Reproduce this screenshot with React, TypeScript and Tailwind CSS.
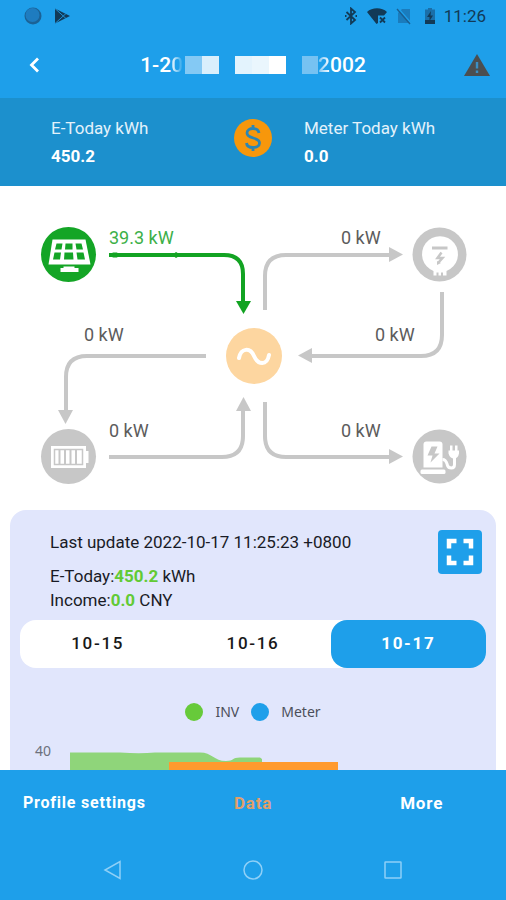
import { useState } from "react";

const GRAY = "#c7c7c7";
const GREEN = "#12a322";

function StatusBar() {
  return (
    <div className="flex h-8 shrink-0 items-center justify-between pl-6 pr-5 text-[#123a57]">
      <div className="flex items-center gap-3">
        <svg viewBox="0 0 18 18" className="size-[18px]" aria-hidden="true">
          <circle cx="9" cy="9" r="8.500" fill="#1b6296" />
          <circle cx="8.500" cy="8" r="7" fill="#1e7cc0" />
        </svg>
        <svg viewBox="0 0 18 18" className="size-[18px]" aria-hidden="true">
          <path d="M1 1.500l15 7.500-15 7.500z" fill="currentColor" />
          <path d="M1 1.500l11 10M1 16.500l11-10" stroke="#1e8fd5" strokeWidth="1" fill="none" />
        </svg>
      </div>
      <div className="flex items-center">
        <svg viewBox="0 0 14 18" className="h-[18px] w-[14px]" fill="none" stroke="currentColor" strokeWidth="1.800" aria-hidden="true">
          <path d="M2.500 5l8.500 8-4 3.500V1.500L11 5l-8.500 8M1 9h1.500M11.500 9H13" />
        </svg>
        <svg viewBox="0 0 22 18" className="ml-2 h-[18px] w-[22px]" aria-hidden="true">
          <path d="M1 5C6 0 16 0 21 5l-3 3.500h-6V16L10.500 17z" fill="currentColor" />
          <path d="M14 10.500l5 5M19 10.500l-5 5" stroke="currentColor" strokeWidth="1.800" />
        </svg>
        <svg viewBox="0 0 16 18" className="ml-2 h-[18px] w-4" aria-hidden="true">
          <path d="M6 2h8v14H2V6z" fill="#1a7cbd" />
          <path d="M2 1l13 15" stroke="#1e9fea" strokeWidth="1.500" />
          <path d="M1 2l13 15" stroke="#1a5f91" strokeWidth="1.300" />
        </svg>
        <svg viewBox="0 0 12 18" className="ml-3 h-[18px] w-3" aria-hidden="true">
          <path d="M4 1h4v1.500h3V17H1V2.500h3z" fill="#1a6fa9" />
          <path d="M1 13h10v4H1z" fill="currentColor" />
          <path d="M7 4L3 10h2.500v4L9 8.500H6.500z" fill="currentColor" />
        </svg>
        <span className="ml-2 text-[17px] leading-6">11:26</span>
      </div>
    </div>
  );
}

function TitleBar() {
  return (
    <header className="grid h-[66px] shrink-0 grid-cols-[44px_1fr_44px] items-center px-3">
      <button type="button" aria-label="Back" className="flex h-11 items-center justify-center">
        <svg viewBox="0 0 12 16" className="h-4 w-3" fill="none" stroke="#fff" strokeWidth="2.800" aria-hidden="true">
          <path d="M10 1.500L3.500 8l6.500 6.500" />
        </svg>
      </button>
      <h1 className="flex items-center justify-center text-[21px] font-medium leading-6 text-white">
        <span>1-2</span>
        <span className="bg-linear-to-r from-white to-transparent bg-clip-text text-transparent">0</span>
        <span className="ml-0.5 flex h-[18px]">
          <span className="w-[17px] bg-[#84c9f4]" />
          <span className="w-[17px] bg-[#d9effc]" />
        </span>
        <span className="ml-4 flex h-[18px]">
          <span className="w-[17px] bg-[#e3f3fd]" />
          <span className="w-[17px] bg-[#eaf6fd]" />
          <span className="w-[17px] bg-white" />
        </span>
        <span className="ml-4 h-[18px] w-4 bg-[#76c2f2]" />
        <span className="bg-linear-to-r from-[#76c2f2] to-white bg-clip-text text-transparent">2</span>
        <span>002</span>
      </h1>
      <button type="button" aria-label="Alerts" className="flex h-11 items-center justify-end">
        <svg viewBox="0 0 26 22" className="mr-1 h-[22px] w-[26px]" aria-hidden="true">
          <path d="M13 0l13 22H0z" fill="#4b4e50" />
          <path d="M13 8v6.500M13 16.500v2.500" stroke="#3b8fc4" strokeWidth="2.400" />
        </svg>
      </button>
    </header>
  );
}

function Totals() {
  return (
    <section className="grid h-[88px] shrink-0 grid-cols-[1fr_38px_1fr] items-center bg-[#1c90cd] text-white">
      <dl className="pl-[51px] text-[17px] leading-7">
        <dt className="text-[#e3f2fb]">E-Today kWh</dt>
        <dd className="font-bold">450.2</dd>
      </dl>
      <svg viewBox="0 0 38 38" className="mb-2 size-[38px]" aria-hidden="true">
        <circle cx="19" cy="19" r="19" fill="#f7970b" />
        <path
          d="M25 14c-.5-3-3-4.500-6-4.500s-6 1.500-6 4.500c0 6.500 12.500 3.500 12.500 10 0 3-3 4.500-6.500 4.500S12.800 27 12.500 24M19 6v4M19 28v4"
          fill="none"
          stroke="#2b86b4"
          strokeWidth="2.800"
        />
      </svg>
      <dl className="pl-8 text-[17px] leading-7">
        <dt className="text-[#e3f2fb]">Meter Today kWh</dt>
        <dd className="font-bold">0.0</dd>
      </dl>
    </section>
  );
}

const flows = [
  { line: "M109 69H224Q243 69 243 88V116", head: "M236 115h15l-7.500 13z", color: GREEN, label: "39.3 kW", x: 109, y: 58 },
  { line: "M265 124V90Q265 69 286 69H390", head: "M389 61v15l14-7.500z", color: GRAY, label: "0 kW", x: 341, y: 58 },
  { line: "M442 106V149Q442 170 421 170H311", head: "M312 162v15l-14-7.500z", color: GRAY, label: "0 kW", x: 375, y: 155 },
  { line: "M206 170H87Q66 170 66 191V225", head: "M58 224h15l-7.500 14z", color: GRAY, label: "0 kW", x: 84, y: 155 },
  { line: "M109 271H222Q243 271 243 250V224", head: "M236 225h15l-7.500-14z", color: GRAY, label: "0 kW", x: 109, y: 251 },
  { line: "M265 216V250Q265 271 286 271H390", head: "M389 263v15l14-7.500z", color: GRAY, label: "0 kW", x: 341, y: 251 },
];

function FlowDiagram() {
  return (
    <svg viewBox="0 0 506 324" className="block w-full font-[Roboto,sans-serif]" role="img" aria-label="Energy flow">
      {flows.map((f) => (
        <g key={f.line}>
          <path d={f.line} fill="none" stroke={f.color} strokeWidth="4" />
          <path d={f.head} fill={f.color} />
          <text x={f.x} y={f.y} className="text-[18px]" fill={f.color === GREEN ? "#3cb048" : "#5c5c5c"}>
            {f.label}
          </text>
        </g>
      ))}
      <path d="M109 69l4-2.500h4l3 2.500-3 2.500h-4zM172 69l4-3 5 3-5 3z" fill={GREEN} />

      <g transform="translate(68.500 68.500)">
        <circle r="27.500" fill="#14a526" />
        <path d="M-16-15H17L22 10H-20z" fill="#fff" />
        <path
          d="M-12-11h6l-1 6h-6.500zM-3-11h7v6h-7.500zM7-11h6l1.500 6H8zM-14-2h6.500l-1 7h-7zM-4-2h8.500l.5 7h-9.500zM8-2h7l1.500 7H9z"
          fill="#14a526"
        />
        <path d="M-8 17.500v-4h3v-1.500H6v1.500h4v4z" fill="#fff" />
      </g>

      <g transform="translate(439.500 68.500)">
        <circle r="27" fill={GRAY} />
        <path d="M-6 21v-4.500A18 18 0 1 1 7 16.500V21H3.500v-3h-2v3h-2.500v-3h-2v3z" fill="#fff" />
        <path d="M-7.500-6.500H8" stroke={GRAY} strokeWidth="3" />
        <path d="M2-2l-4 5.500h5L-1 8" fill="none" stroke={GRAY} strokeWidth="2.500" />
        <path d="M-2.500 10.500l0-4 4 2z" fill={GRAY} />
      </g>

      <g transform="translate(254 170)">
        <circle r="28" fill="#fdd6a0" />
        <path d="M-15 2C-13-8-4-9 0 0S13 10 15-1" fill="none" stroke="#fff" strokeWidth="4" strokeLinecap="round" />
      </g>

      <g transform="translate(68.500 270.500)">
        <circle r="27.500" fill={GRAY} />
        <path d="M-17.500-10.500h35v5h2.500v12h-2.500v5h-35z" fill="#fff" />
        <rect x="-14" y="-7" width="28" height="15" fill="none" stroke={GRAY} strokeWidth="1.500" />
        <path d="M-9-7v15M-3.500-7v15M2-7v15M7.500-7v15" stroke={GRAY} strokeWidth="2" />
      </g>

      <g transform="translate(439.500 270.500)">
        <circle r="27" fill={GRAY} />
        <path d="M-16 11v-23q0-3 3-3H0q3 0 3 3v23z" fill="#fff" />
        <rect x="-19" y="13" width="25" height="4.500" rx="1.500" fill="#fff" />
        <path d="M-8-10L-12-1h5l-2 7L0-3h-5l3-7z" fill={GRAY} />
        <path d="M3 3c4 0 4 3 5 6s7 4 7-1V0" fill="none" stroke="#fff" strokeWidth="3" />
        <path d="M9-6h10.500v3q-1 5-5 5t-5.500-5zM10.500-11h2.500v5h-2.500zM15.500-11H18v5h-2.500z" fill="#fff" />
      </g>
    </svg>
  );
}

const days = ["10-15", "10-16", "10-17"];

function DayTabs() {
  const [active, setActive] = useState("10-17");
  return (
    <div className="mt-2 grid h-12 grid-cols-3 rounded-2xl bg-white">
      {days.map((day) => (
        <button
          key={day}
          type="button"
          aria-pressed={day === active}
          onClick={() => setActive(day)}
          className={
            day === active
              ? "rounded-2xl bg-[#1e9fea] text-[17px] font-bold tracking-widest text-white"
              : "rounded-2xl text-[17px] font-medium tracking-widest text-[#181818]"
          }
        >
          {day}
        </button>
      ))}
    </div>
  );
}

function Report() {
  return (
    <section className="mx-[10px] rounded-t-2xl bg-[#e1e6fc] px-[10px] pt-5">
      <div className="flex items-start justify-between pl-[30px] pr-1 text-[17px] text-[#191b26]">
        <div className="leading-6">
          <p className="mb-[10px]">Last update 2022-10-17 11:25:23 +0800</p>
          <p>
            E-Today:<strong className="text-[#62ca35]">450.2</strong> kWh
          </p>
          <p>
            Income:<strong className="text-[#62ca35]">0.0</strong> CNY
          </p>
        </div>
        <button type="button" aria-label="Full screen" className="flex size-11 shrink-0 items-center justify-center rounded-sm bg-[#1e9fea]">
          <svg viewBox="0 0 28 28" className="size-7" fill="none" stroke="#fff" strokeWidth="4.500" aria-hidden="true">
            <path d="M3 10.500V3h7.500M17.500 3H25v7.500M25 17.500V25h-7.500M10.500 25H3v-7.500" />
          </svg>
        </button>
      </div>
      <DayTabs />
      <div className="mt-8 flex items-center justify-center gap-3 font-['Noto_Sans',sans-serif] text-sm leading-6 text-[#4c4f5a]">
        <span className="flex items-center gap-3">
          <span className="size-[18px] rounded-full bg-[#67ca3a]" />
          INV
        </span>
        <span className="flex items-center gap-3">
          <span className="size-[18px] rounded-full bg-[#1e9fea]" />
          Meter
        </span>
      </div>
      <svg viewBox="0 0 466 200" className="mt-4 block w-full font-['Noto_Sans',sans-serif]" role="img" aria-label="Power by hour">
        <text x="15" y="16" className="text-[14px]" fill="#6d717d">
          40
        </text>
        <path
          d="M50 200V12.500H100Q120 14 135 12.500H180C192 12.500 194 21 206 21C214 21 212 17.500 220 17.500H240L242 19V200z"
          fill="#8fd57a"
        />
        <path d="M149 22H318V200H149z" fill="#ff9a2e" />
      </svg>
    </section>
  );
}

function BottomBar() {
  return (
    <footer className="shrink-0">
      <nav className="grid h-[66px] grid-cols-3 items-center font-bold tracking-wider text-white">
        <a href="#profile" className="whitespace-nowrap text-center text-base leading-6">Profile settings</a>
        <a href="#data" aria-current="page" className="text-center text-[17px] leading-6 text-[#e2a06a]">Data</a>
        <a href="#more" className="text-center text-[17px] leading-6">More</a>
      </nav>
      <div className="flex h-16 items-center justify-center gap-[120px] pb-1 pt-2">
        <button type="button" aria-label="System back">
          <svg viewBox="0 0 20 20" className="size-5" fill="none" stroke="#8fd0f7" strokeWidth="1.500" aria-hidden="true">
            <path d="M17 1.500v17L2 10z" />
          </svg>
        </button>
        <button type="button" aria-label="Home">
          <svg viewBox="0 0 20 20" className="size-5" fill="none" stroke="#8fd0f7" strokeWidth="1.500" aria-hidden="true">
            <circle cx="10" cy="10" r="9" />
          </svg>
        </button>
        <button type="button" aria-label="Recent apps">
          <svg viewBox="0 0 20 20" className="size-5" fill="none" stroke="#8fd0f7" strokeWidth="1.500" aria-hidden="true">
            <rect x="2" y="2" width="16" height="16" rx="0.500" />
          </svg>
        </button>
      </div>
    </footer>
  );
}

export default function App() {
  return (
    <div className="flex h-screen flex-col bg-[#1e9fea] font-[Roboto,sans-serif]">
      <StatusBar />
      <TitleBar />
      <Totals />
      <main className="min-h-0 flex-1 overflow-y-auto bg-white [scrollbar-width:none]">
        <FlowDiagram />
        <Report />
      </main>
      <BottomBar />
    </div>
  );
}
